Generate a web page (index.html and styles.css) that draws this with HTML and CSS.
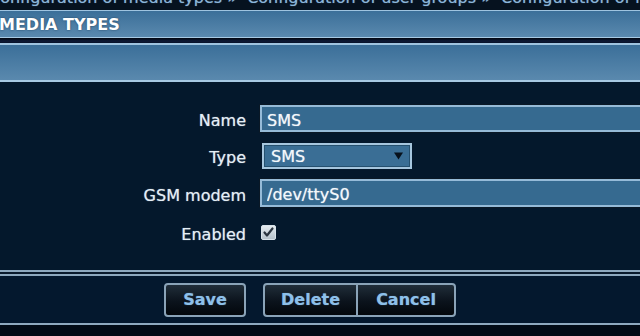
FILE: index.html
```html
<!DOCTYPE html>
<html lang="en">
<head>
<meta charset="utf-8">
<title>Media types</title>
<link rel="stylesheet" href="styles.css">
</head>
<body>
<div class="page">
  <div class="crumbs"><span class="crumbs-text">Configuration of media types » &nbsp;Configuration of user groups » &nbsp;Configuration of media types</span></div>
  <div class="bar title">MEDIA TYPES</div>
  <div class="sep"></div>
  <div class="bar sub"></div>
  <form class="form">
    <label class="lbl" for="name">Name</label>
    <input class="field" id="name" type="text" value="SMS">
    <label class="lbl" for="type">Type</label>
    <div class="select-wrap">
      <select class="select" id="type"><option>SMS</option></select>
      <svg class="arrow" width="9" height="9" viewBox="0 0 9 9"><path d="M0 1.5 L9 1.5 L4.5 8.5 Z" fill="#07111c"/></svg>
    </div>
    <label class="lbl" for="modem">GSM modem</label>
    <input class="field" id="modem" type="text" value="/dev/ttyS0">
    <label class="lbl" for="enabled">Enabled</label>
    <div class="check-cell">
      <svg class="check" id="enabled" width="15" height="15" viewBox="0 0 15 15">
        <defs>
          <linearGradient id="cb" x1="0" y1="0" x2="0" y2="1">
            <stop offset="0" stop-color="#e6ecf0"/>
            <stop offset="1" stop-color="#b4c0ca"/>
          </linearGradient>
        </defs>
        <rect x="0.5" y="0.5" width="14" height="14" rx="1.5" fill="url(#cb)" stroke="#d8e2ea"/>
        <path d="M3.5 7.5 L6 10.5 L11.5 3.5" fill="none" stroke="#2a3440" stroke-width="2.2" stroke-linecap="round" stroke-linejoin="round"/>
      </svg>
    </div>
  </form>
  <div class="dbl"></div>
  <div class="actions">
    <button class="btn btn-save" type="button">Save</button>
    <button class="btn btn-delete" type="button">Delete</button>
    <button class="btn btn-cancel" type="button">Cancel</button>
  </div>
  <div class="foot"></div>
</div>
</body>
</html>
```
FILE: styles.css
```css
html, body {
  margin: 0;
  padding: 0;
}
body {
  width: 640px;
  height: 336px;
  overflow: hidden;
  background: #04182c;
  font-family: "DejaVu Sans", Verdana, sans-serif;
  font-size: 16px;
}
.page {
  display: flex;
  flex-direction: column;
  width: 640px;
}
.crumbs {
  height: 10px;
  overflow: hidden;
  background: #06121f;
  white-space: nowrap;
}
.crumbs-text {
  display: block;
  margin-top: -10px;
  margin-left: -11px;
  line-height: 16px;
  color: #8bb6da;
  text-shadow: 0 0 1px rgba(139, 182, 218, 0.6);
}
.bar {
  background: linear-gradient(#3b6f99, #5a89ae);
}
.title {
  height: 26px;
  border-top: 1px solid #9fc4e0;
  border-bottom: 1px solid #a8cae4;
  color: #ffffff;
  font-weight: bold;
  line-height: 28px;
  text-indent: -1px;
  text-shadow: 0 0 2px #1d3f5c;
}
.sep {
  height: 5px;
  background: linear-gradient(#02060f, #0d1a36 60%, #08132a);
}
.sub {
  height: 35px;
  border-top: 2px solid #9fc4e0;
  border-bottom: 2px solid #a8cae4;
}
.form {
  display: grid;
  grid-template-columns: 246px 1fr;
  grid-template-rows: 27px 27px 28px 30px;
  column-gap: 14px;
  row-gap: 10px;
  padding-top: 23px;
  padding-bottom: 23px;
  margin: 0;
}
.lbl {
  justify-self: end;
  align-self: center;
  color: #e4eef6;
  padding-top: 5px;
  line-height: 18px;
  text-shadow: 0 0 1px rgba(228, 238, 246, 0.7);
}
.field {
  box-sizing: border-box;
  width: 420px;
  height: 100%;
  margin: 0;
  padding: 3px 5px 0;
  border: 2px solid #96bbd8;
  outline: 1px solid #0a1826;
  background: #366a90;
  color: #f4f8fb;
  font-family: "DejaVu Sans", Verdana, sans-serif;
  font-size: 16px;
  text-shadow: 0 0 1px rgba(244, 248, 251, 0.7);
}
.select-wrap {
  position: relative;
  width: 150px;
  height: 26px;
  align-self: center;
  margin-left: 2px;
}
.select {
  box-sizing: border-box;
  width: 150px;
  height: 26px;
  margin: 0;
  padding: 2px 0 0 7px;
  border: 2px solid #a6c6de;
  border-radius: 0;
  box-shadow: inset 0 0 0 1px #25506f;
  background: #3a6e95;
  color: #f4f8fb;
  font-family: "DejaVu Sans", Verdana, sans-serif;
  font-size: 16px;
  text-shadow: 0 0 1px rgba(244, 248, 251, 0.7);
  -webkit-appearance: none;
  appearance: none;
}
.arrow {
  position: absolute;
  right: 9px;
  top: 8px;
}
.check-cell {
  display: flex;
  align-items: center;
  padding-left: 1px;
}
.check {
  display: block;
}
.dbl {
  height: 2px;
  border-top: 2px solid #8ea9bf;
  border-bottom: 2px solid #8ea9bf;
  background: #0a1a2c;
}
.actions {
  display: flex;
  align-items: flex-start;
  height: 40px;
  padding: 7px 0 0 164px;
  background: #04182e;
}
.btn {
  box-sizing: border-box;
  height: 34px;
  margin: 0;
  padding: 0;
  border: 2px solid #8aa3b8;
  border-radius: 4px;
  background: linear-gradient(#202d39, #0b131c 55%, #03070c);
  color: #8dc0ea;
  font-family: "DejaVu Sans", Verdana, sans-serif;
  font-size: 16px;
  font-weight: bold;
  line-height: 28px;
  text-shadow: 0 0 1px rgba(141, 192, 234, 0.6);
}
.btn-save {
  width: 82px;
  margin-right: 17px;
}
.btn-delete {
  width: 95px;
  border-top-right-radius: 0;
  border-bottom-right-radius: 0;
}
.btn-cancel {
  width: 100px;
  margin-left: -2px;
  border-top-left-radius: 0;
  border-bottom-left-radius: 0;
}
.foot {
  height: 11px;
  border-top: 2px solid #8ea9bf;
  background: #020b16;
}
```
